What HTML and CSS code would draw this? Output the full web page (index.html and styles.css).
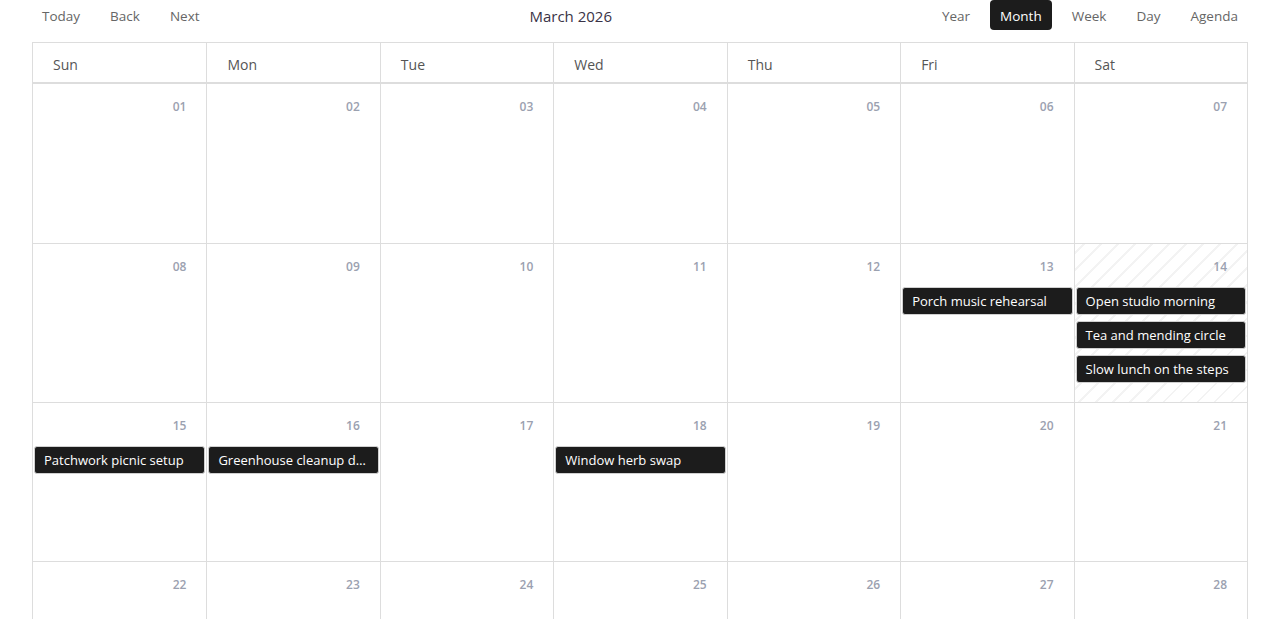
FILE: index.html
```html
<!DOCTYPE html>
<html>
<head>
<meta charset="utf-8">
<link rel="stylesheet" href="styles.css">
</head>
<body>
<div class="page">
  <div class="toolbar">
    <div class="btn-group">
      <button class="btn">Today</button>
      <button class="btn">Back</button>
      <button class="btn">Next</button>
    </div>
    <div class="title">March 2026</div>
    <div class="btn-group">
      <button class="btn">Year</button>
      <button class="btn active">Month</button>
      <button class="btn">Week</button>
      <button class="btn">Day</button>
      <button class="btn">Agenda</button>
    </div>
  </div>
  <div class="month">
    <div class="head">
      <div class="hcell">Sun</div><div class="hcell">Mon</div><div class="hcell">Tue</div><div class="hcell">Wed</div><div class="hcell">Thu</div><div class="hcell">Fri</div><div class="hcell">Sat</div>
    </div>
    <div class="week">
      <div class="day"><div class="num">01</div></div>
      <div class="day"><div class="num">02</div></div>
      <div class="day"><div class="num">03</div></div>
      <div class="day"><div class="num">04</div></div>
      <div class="day"><div class="num">05</div></div>
      <div class="day"><div class="num">06</div></div>
      <div class="day"><div class="num">07</div></div>
    </div>
    <div class="week">
      <div class="day"><div class="num">08</div></div>
      <div class="day"><div class="num">09</div></div>
      <div class="day"><div class="num">10</div></div>
      <div class="day"><div class="num">11</div></div>
      <div class="day"><div class="num">12</div></div>
      <div class="day"><div class="num">13</div><div class="event">Porch music rehearsal</div></div>
      <div class="day today"><div class="num">14</div><div class="event">Open studio morning</div><div class="event">Tea and mending circle</div><div class="event">Slow lunch on the steps</div></div>
    </div>
    <div class="week">
      <div class="day"><div class="num">15</div><div class="event">Patchwork picnic setup</div></div>
      <div class="day"><div class="num">16</div><div class="event">Greenhouse cleanup day</div></div>
      <div class="day"><div class="num">17</div></div>
      <div class="day"><div class="num">18</div><div class="event">Window herb swap</div></div>
      <div class="day"><div class="num">19</div></div>
      <div class="day"><div class="num">20</div></div>
      <div class="day"><div class="num">21</div></div>
    </div>
    <div class="week">
      <div class="day"><div class="num">22</div></div>
      <div class="day"><div class="num">23</div></div>
      <div class="day"><div class="num">24</div></div>
      <div class="day"><div class="num">25</div></div>
      <div class="day"><div class="num">26</div></div>
      <div class="day"><div class="num">27</div></div>
      <div class="day"><div class="num">28</div></div>
    </div>
  </div>
</div>
</body>
</html>
```
FILE: styles.css
```css
* { box-sizing: border-box; }
body {
  margin: 0;
  font-family: "Open Sans", "Noto Sans", sans-serif;
  background: #fff;
  color: #333;
}
.page { padding: 0 32px; }
.toolbar {
  display: flex;
  align-items: flex-start;
  justify-content: space-between;
  height: 42px;
}
.btn-group { display: flex; gap: 10px; }
.btn {
  font-family: inherit;
  font-size: 13.5px;
  color: #666;
  background: none;
  border: none;
  border-radius: 4px;
  height: 30px;
  padding: 2px 10px 0;
  cursor: pointer;
}
.btn.active { background: #1c1c1c; color: #fff; }
.title { font-size: 15px; color: #3a3346; line-height: 32px; }
.month {
  border: 1px solid #ddd;
  border-bottom: none;
}
.head {
  display: grid;
  grid-template-columns: repeat(7, 1fr);
  height: 41px;
  border-bottom: 2px solid #ddd;
}
.hcell {
  padding: 3px 0 0 20px;
  font-size: 14px;
  color: #555;
  display: flex;
  align-items: center;
}
.hcell + .hcell { border-left: 1px solid #ddd; }
.week {
  display: grid;
  grid-template-columns: repeat(7, 1fr);
  height: 159px;
}
.week + .week { border-top: 1px solid #ddd; }
.day {
  display: flex;
  flex-direction: column;
  gap: 6px;
  padding: 0 1px;
  min-width: 0;
}
.day + .day { border-left: 1px solid #ddd; }
.day.today {
  background: repeating-linear-gradient(-45deg, #fff 0 10px, #f3f3f3 10px 12px);
}
.num {
  text-align: right;
  padding: 14px 19px 0 0;
  height: 37px;
  font-size: 12px;
  color: #9ba1b0;
  font-weight: 600;
}
.event {
  background: #1c1c1c;
  color: #fff;
  border: 1px solid #d0d0d0;
  border-radius: 3px;
  height: 28px;
  padding: 0 9px;
  font-size: 13px;
  line-height: 26px;
  white-space: nowrap;
  overflow: hidden;
  text-overflow: ellipsis;
}
```
